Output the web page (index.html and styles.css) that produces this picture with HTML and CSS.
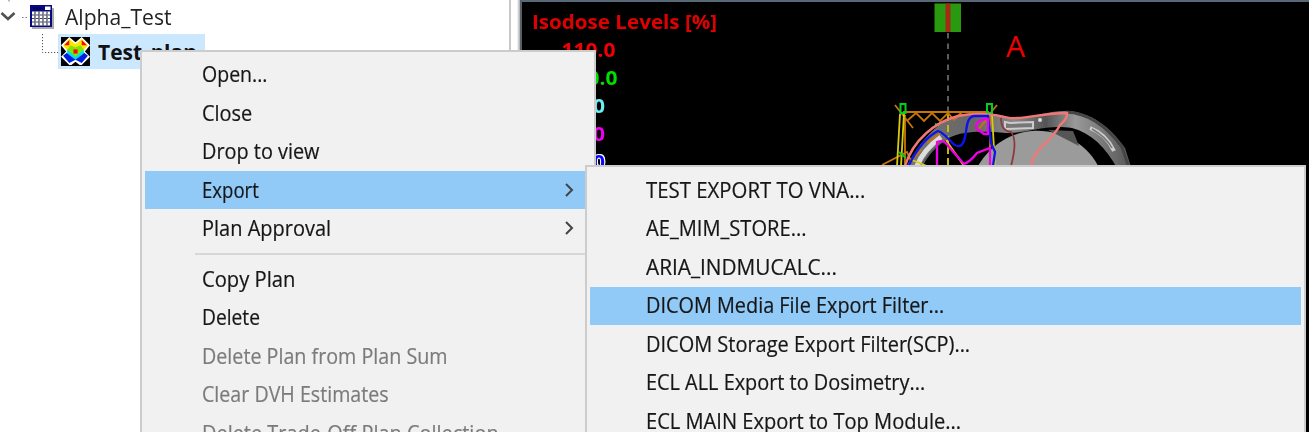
FILE: index.html
```html
<!DOCTYPE html>
<html lang="en">
<head>
<meta charset="utf-8">
<title>Treatment planning</title>
<link rel="stylesheet" href="styles.css">
</head>
<body>
<main class="workspace">
  <section class="tree">
    <div class="tree-row">
      <svg class="branch" width="29" height="34" viewBox="0 0 29 34">
        <path d="M9 0v2M22 17.500h8" stroke="#777" stroke-dasharray="1.500 2" fill="none"/>
        <path d="M1.500 13l6.500 6 6.500-6" fill="none" stroke="#505050" stroke-width="2.600"/>
      </svg>
      <svg class="course-icon" width="25" height="25" viewBox="0 0 25 25">
        <path d="M3 3h22v21H3z" fill="#aaa"/>
        <path d="M1 0h22v22H1z" fill="#080880"/>
        <path d="M16 1.500h5.500v3.500h-5.500zM3 6.500h18v14H3z" fill="#fff"/>
        <path d="M6 6.500v14M10 6.500v14M14 6.500v14M18 6.500v14" stroke="#101030" stroke-width="1"/>
        <path d="M3 10h18M3 13.500h18M3 17h18" stroke="#101030" stroke-width=".8" stroke-dasharray="2.500 1.500"/>
        <path d="M4 3.500h9" stroke="#000040" stroke-width="2" stroke-dasharray="2 1"/>
      </svg>
      <span class="label course">Alpha_Test</span>
    </div>
    <div class="tree-row child">
      <svg class="branch" width="58" height="35" viewBox="0 0 58 35">
        <path d="M42.500 0v18.500h16" stroke="#555" stroke-dasharray="1.200 1.800" fill="none"/>
      </svg>
      <div class="selected">
        <svg width="29" height="29" viewBox="0 0 28 28">
          <path d="M0 0h28v28H0z" fill="#000"/>
          <path d="M0 8L8 0l6 5 6-5 8 8-5 6 5 5-8 8h-2l-4-3-4 3H8l-8-8 5-5z" fill="#fff"/>
          <path d="M2 8l6-6 6 5 6-5 6 6-5 6-7 8-7-8z" fill="#ffe600"/>
          <path d="M3 8l5-5v5zM25 8l-5-5v5z" fill="#f00"/>
          <path d="M9 8l5 2 5-2 3 4-8 9-8-9z" fill="#80e800"/>
          <path d="M2 18l4-3 8 6 8-6 4 3-6 7-6-3-6 3z" fill="#001ee0"/>
          <path d="M6 12l8 7 8-7v4l-8 6-8-6z" fill="#00dce8"/>
          <path d="M12 12h4v4h-4z" fill="#f00"/>
          <path d="M0 12l3 3-3 3zM28 12l-3 3 3 3z" fill="#000"/>
        </svg>
        <span class="label plan">Test_plan</span>
      </div>
    </div>
  </section>
  <div class="splitter"></div>
  <section class="viewer">
    <div class="isodose">
      <div class="isodose-title"><span>Isodose Levels [%]</span></div>
      <div class="level l110"><span>110.0</span></div>
      <div class="level l100"><span>100.0</span></div>
      <div class="level l95"><span>95.0</span></div>
      <div class="level l90"><span>90.0</span></div>
      <div class="level l80"><span>80.0</span></div>
    </div>
    <svg class="scan" width="300" height="170" viewBox="860 0 300 170">
      <defs>
        <linearGradient id="tissue" x1="0" x2="1"><stop offset="0" stop-color="#777"/><stop offset=".3" stop-color="#666"/><stop offset=".48" stop-color="#888"/><stop offset=".62" stop-color="#555"/><stop offset=".75" stop-color="#999"/><stop offset="1" stop-color="#555"/></linearGradient>
        <filter id="soft" x="-5%" y="-5%" width="110%" height="110%"><feGaussianBlur stdDeviation=".7"/></filter>
      </defs>
      <g filter="url(#soft)">
        <path d="M905 170C917 145 935 124 955 116C976 111 993 113 1010 118C1030 119 1045 111 1066 111C1092 112 1111 128 1125 148L1132 170H1118C1106 147 1091 133 1072 128C1045 124 1030 133 1006 133C982 131 957 130 943 142C932 150 925 160 921 170Z" fill="url(#tissue)"/>
        <path d="M1066 112C1090 113 1108 128 1122 147L1129 168" stroke="#444" stroke-width="3" fill="none"/>
        <path d="M976 170C985 151 1006 133 1032 131C1061 129 1089 144 1100 170Z" fill="#9b9b9b"/>
        <path d="M1048 130L1073 131 1079 146Z" fill="#555"/>
        <path d="M917 166Q923 150 941 137" stroke="#ddd" stroke-width="5" fill="none"/>
        <path d="M921 166Q930 151 942 142" stroke="#555" stroke-width="1.500" fill="none"/>
        <path d="M1005 122l5 1 23-1v6l-28 1z" fill="#777" stroke="#ccc" stroke-width="2"/>
        <path d="M1090 128Q1106 134 1114 151" stroke="#ccc" stroke-width="4" fill="none"/>
        <path d="M1092 129Q1106 137 1112 148" stroke="#777" stroke-width="1.500" fill="none"/>
        <circle cx="1040" cy="120" r="2" fill="#ddd"/>
      </g>
      <path d="M948 33v132" stroke="#6c6c6c" stroke-width="1.700" stroke-dasharray="5.500 5"/>
      <path d="M948 114v52" stroke="#d6c900" stroke-width="1.700" stroke-dasharray="7 4"/>
      <path d="M934.500 3.500h26.500V32h-26.500z" fill="#299910"/><path d="M945.500 3.500h5V32h-5z" fill="#a32a13"/>
      <g fill="none" stroke-width="1.800">
        <path d="M895 105l18 23M997 105l-9 11M903 112h86M905 115v52M908 120l8-7 8 8 8-8 8 8 8-8 6 7 8-8" stroke="#c87508"/>
        <path d="M882 165l25-13 4 9 11-12M927 143l13-10M978 130l8-10M990 114v35" stroke="#c87508"/>
        <path d="M900 114l-3 52M904 114l-3 52M992 114l3 52M912 160l15 6M946 140l18 26" stroke="#d9cb0a"/>
        <path d="M900.500 104h5v9h-5zM987 104h5v9h-5zM899 152l7 6M935 124l4 1" stroke="#00d020" stroke-width="2"/>
        <path d="M905 166C913 140 935 122 958 116C982 111 1000 116 1010 118C1030 119 1040 113 1067 113Q1068 118 1060 125C1053 140 1033 149 1031 166" stroke="#f17876" stroke-width="2.400"/>
        <path d="M909 165C916 151 926 137 938 131C948 134 952 148 960 146C969 142 963 117 974 116H988L991 143 995 152 993 166" stroke="#0b12ef" stroke-width="2.300"/>
        <path d="M937 166V142Q944 139 949 147L964 164Q970 162 977 153L990 148V166M985 119Q975 121 976 128L984 134H988V119Z" stroke="#f000e6" stroke-width="2.300"/>
        <path d="M1001 118Q1001 131 1011 132Q1018 140 1011 166" stroke="#8b3a3e"/>
      </g>
      <text class="orientation" x="1006" y="57" textLength="19" lengthAdjust="spacingAndGlyphs">A</text>
    </svg>
  </section>

  <nav class="menu context">
    <div class="item"><span style="--fit:.93">Open...</span></div>
    <div class="item"><span style="--fit:.95">Close</span></div>
    <div class="item"><span style="--fit:.946">Drop to view</span></div>
    <div class="item active"><span style="--fit:.884">Export</span><svg class="arrow" width="9" height="14"><path d="M1 1l6 6-6 6"/></svg></div>
    <div class="item"><span style="--fit:.952">Plan Approval</span><svg class="arrow" width="9" height="14"><path d="M1 1l6 6-6 6"/></svg></div>
    <div class="separator"></div>
    <div class="item"><span style="--fit:.961">Copy Plan</span></div>
    <div class="item"><span style="--fit:.915">Delete</span></div>
    <div class="item disabled"><span style="--fit:.938">Delete Plan from Plan Sum</span></div>
    <div class="item disabled"><span style="--fit:.935">Clear DVH Estimates</span></div>
    <div class="item disabled"><span style="--fit:.949">Delete Trade-Off Plan Collection</span></div>
  </nav>
  <nav class="menu submenu">
    <div class="item"><span style="--fit:.97">TEST EXPORT TO VNA...</span></div>
    <div class="item"><span style="--fit:.958">AE_MIM_STORE...</span></div>
    <div class="item"><span style="--fit:.99">ARIA_INDMUCALC...</span></div>
    <div class="item active"><span style="--fit:.946">DICOM Media File Export Filter...</span></div>
    <div class="item"><span style="--fit:.951">DICOM Storage Export Filter(SCP)...</span></div>
    <div class="item"><span style="--fit:.947">ECL ALL Export to Dosimetry...</span></div>
    <div class="item"><span style="--fit:.957">ECL MAIN Export to Top Module...</span></div>
  </nav>
</main>
</body>
</html>
```
FILE: styles.css
```css
* { box-sizing: border-box; }
body { margin: 0; font-family: "Open Sans", "Noto Sans", sans-serif; }
.workspace { position: relative; display: flex; width: 1309px; height: 432px; overflow: hidden; background: #fff; }
.tree { width: 509px; background: #fff; }
.tree-row { display: flex; height: 34px; }
.tree-row .branch { flex: none; }
.course-icon { margin-top: 5px; }
.label { display: block; font-size: 21px; line-height: 34px; color: #222; white-space: nowrap; transform-origin: left; }
.course { margin-left: 11px; transform: scaleX(1.005); }
.child { height: 35px; }
.selected { display: flex; align-items: center; width: 147px; height: 35px; padding-left: 3px; background: #cce8ff; }
.selected svg { flex: none; }
.plan { margin-left: 8px; font-weight: 700; color: #111; transform: scaleX(1); }
.splitter { width: 13px; border-left: 2px solid #c8c8c8; border-right: 2px solid #57606a; background: linear-gradient(90deg, #fff 65%, #aaa); }
.viewer { display: flex; width: 787px; background: #000; border-top: 2px solid #596879; }
.isodose { width: 338px; padding: 6px 0 0 10px; font-weight: 700; font-size: 20px; }
.isodose-title, .level { height: 28px; line-height: 28px; white-space: nowrap; }
.isodose span { display: inline-block; transform-origin: left; transform: scaleX(1.03); }
.isodose-title { color: #e00000; }
.level { width: 73px; text-align: right; }
.isodose .level span { transform-origin: right; transform: scaleX(1.05); }
.l110 { width: 83px; color: #f00000; }
.l100 { width: 85px; color: #00df00; }
.l95 { color: #70edf4; }
.l90 { color: #ed00ed; }
.l80 { color: #0808ff; text-shadow: 1px 0 #fff, -1px 0 #fff, 0 1px #fff, 0 -1px #fff, 1px -1px #fff; }
.scan { margin-top: -2px; }
.orientation { font-size: 29px; fill: #f00000; }
.menu { position: absolute; background: #f1f1f1; border: 2px solid #ccc; padding: 4px 3px; }
.context { left: 140px; top: 50px; width: 456px; height: 400px; padding-top: 3px; }
.submenu { left: 585px; top: 165px; width: 721px; height: 290px; }
.item { display: flex; align-items: center; justify-content: space-between; height: 38.500px; padding: 0 17px 0 56px; font-size: 21px; color: #161616; white-space: nowrap; }
.context .item { padding-left: 57px; }
.item span { transform-origin: left; transform: scaleX(var(--fit)); -webkit-text-stroke: .2px; }
.submenu .item span { margin-top: -1px; }
.active { background: #91c9f7; }
.disabled { color: #7b7b7b; }
.separator { height: 2px; margin: 5px 0 5px 50px; background: #d7d7d7; }
.arrow { fill: none; stroke: #444; stroke-width: 2; }
```
